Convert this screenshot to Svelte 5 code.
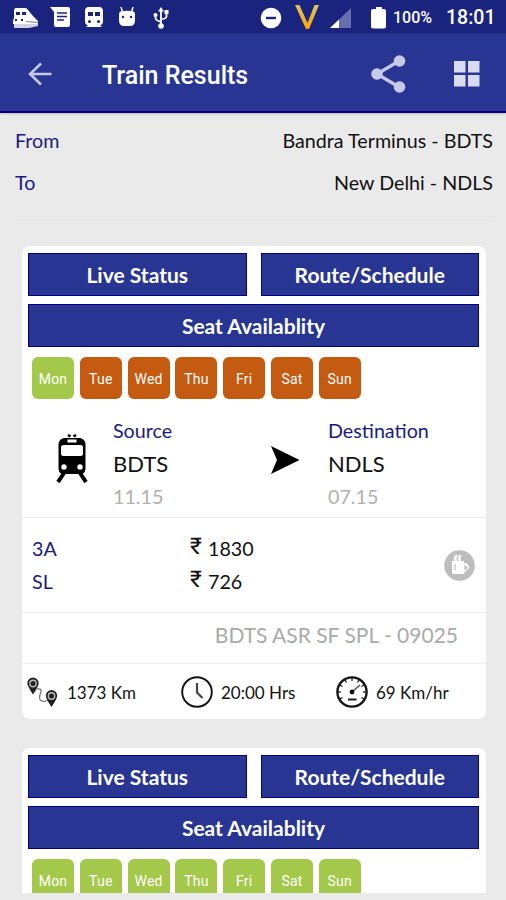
<script lang="ts">

  type Fare = { name: string, price: number };
  type Train = {
    runsOn: boolean[];
    details?: {
      name: string;
      source: string;
      departs: string;
      destination: string;
      arrives: string;
      fares: Fare[];
      distance: string;
      duration: string;
      speed: string;
    };
  };

  const DAYS = ["Mon", "Tue", "Wed", "Thu", "Fri", "Sat", "Sun"];

  const trains: Train[] = [
    {
      runsOn: [true, false, false, false, false, false, false],
      details: {
        name: "BDTS ASR SF SPL - 09025",
        source: "BDTS",
        departs: "11.15",
        destination: "NDLS",
        arrives: "07.15",
        fares: [
          { name: "3A", price: 1830 },
          { name: "SL", price: 726 },
        ],
        distance: "1373 Km",
        duration: "20:00 Hrs",
        speed: "69 Km/hr",
      },
    },
    { runsOn: [true, true, true, true, true, true, true] },
  ];

  // tick marks of the speedometer, in degrees
  const TICKS = [-120, -90, -60, -30, 0, 30, 60, 90, 120];

</script>

<main>

  <div class="status-bar">
    <div class="notifications">
      <svg width="26" height="22" viewBox="0 0 26 22" fill="#fff">
        <path d="M3 1h9q2 0 3 2l5 6 5 5v3H0v-3l1-3V4q0-3 2-3z" />
        <path d="M3 5h4v3H3zM9 5h4v3H9z" fill="#1a237e" />
        <path d="M2 12h2v2H2zM8 12h2v2H8z" fill="#1a237e" />
        <path d="M13 14.500l12 1" stroke="#1a237e" stroke-width=".6" />
        <path d="M1 17h24v2l-9 2H1z" opacity=".8" />
      </svg>
      <svg width="21" height="21" viewBox="0 0 21 21">
        <path d="M0 0h18q2 0 2 2v16q0 2-2 2H6q-2 0-2-2V5z" fill="#fff" />
        <path d="M7 6h10M7 9.5h10M7 13h7" stroke="#1a237e" stroke-width="1.6" />
      </svg>
      <svg width="18" height="21" viewBox="0 0 18 21">
        <path d="M4 0h10q4 0 4 4v10q0 4-3 4l2 2H1l2-2q-3 0-3-4V4q0-4 4-4z" fill="#fff" />
        <path d="M3 5h5v4H3zM10 5h5v4h-5z" fill="#1a237e" />
        <circle cx="4.5" cy="14.5" r="1.5" fill="#1a237e" />
        <circle cx="13.5" cy="14.5" r="1.5" fill="#1a237e" />
      </svg>
      <svg class="bot" width="18" height="21" viewBox="0 0 18 21">
        <path d="M3 0l1.500 5M15 0l-1.500 5" stroke="#fff" stroke-width="1.5" />
        <path d="M2.500 4.500q6.500-1.500 13 0 1.500.5 1.500 3V13q0 6-5 6H6q-5 0-5-6V7.500q0-2.500 1.500-3z" fill="#fff" />
        <circle cx="5" cy="10" r="1.200" fill="#1a237e" />
        <circle cx="13" cy="10" r="1.200" fill="#1a237e" />
      </svg>
      <svg class="usb" width="16" height="22" viewBox="0 0 16 22" fill="#fff">
        <path d="M8 3v16M2.500 9v2q0 2 2 2.500L8 15M13.500 6v3.500q0 1.500-2 2L8 12.500" fill="none" stroke="#fff" stroke-width="1.800" />
        <path d="M8 0l3 4.500H5zM11.500 3h4v4h-4z" />
        <circle cx="2.500" cy="8" r="2" />
        <circle cx="8" cy="19" r="2.800" />
      </svg>
    </div>
    <div class="system">
      <svg width="22" height="22" viewBox="0 0 22 22">
        <circle cx="11" cy="11" r="10.300" fill="#fff" />
        <path d="M6 11h10" stroke="#1a237e" stroke-width="2.400" />
      </svg>
      <svg class="brand" width="24" height="25" viewBox="0 0 24 25">
        <defs>
          <linearGradient id="gold" x2="0" y2="1">
            <stop offset="0" stop-color="#d8c260" />
            <stop offset="1" stop-color="#ffa500" />
          </linearGradient>
        </defs>
        <path d="M0 0h4.500l8 18 7-18H24L14 24h-3z" fill="url(#gold)" />
      </svg>
      <svg class="signal" width="21" height="20" viewBox="0 0 21 20">
        <path d="M21 0v20H0z" fill="#6670ad" />
        <path d="M9 11.500V20H0z" fill="#fff" />
      </svg>
      <svg class="battery" width="15" height="22" viewBox="0 0 15 22">
        <path d="M5 0h6v2h2q2 0 2 2v15.500q0 2-2 2H2q-2 0-2-2V4q0-2 2-2h3z" fill="#fff" />
      </svg>
      <span class="percent">100%</span>
      <span class="clock">18:01</span>
    </div>
  </div>

  <header>
    <svg width="24" height="24" viewBox="0 0 24 24" fill="none" stroke="#c5cae9" stroke-width="2.500">
      <path d="M23.500 12H2M13 1.500L2 12l11 10.500" />
    </svg>
    <h1>Train Results</h1>
    <svg class="share" width="35" height="38" viewBox="0 0 35 38" fill="#c5cae9">
      <path d="M28 6L6 19l22 13" fill="none" stroke="#c5cae9" stroke-width="3.200" />
      <circle cx="28.500" cy="6" r="5.800" />
      <circle cx="6" cy="19" r="5.800" />
      <circle cx="28.500" cy="32" r="5.800" />
    </svg>
    <svg width="26" height="26" viewBox="0 0 26 26" fill="#d9dcf0">
      <path d="M0 0h11.500v11.500H0zM14 0h11.500v11.500H14zM0 14h11.500v11.500H0zM14 14h11.500v11.500H14z" />
    </svg>
  </header>

  <section class="trip">
    <div><span class="label">From</span><span>Bandra Terminus - BDTS</span></div>
    <div><span class="label">To</span><span>New Delhi - NDLS</span></div>
  </section>

  <div class="list">
    {#each trains as train}
      <article>
        <div class="actions">
          <button>Live Status</button>
          <button>Route/Schedule</button>
          <button class="wide">Seat Availablity</button>
        </div>

        <div class="days">
          {#each DAYS as day, i}
            <span class:runs={train.runsOn[i]}>{day}</span>
          {/each}
        </div>

        {#if train.details}
          <div class="stations">
            <svg class="train" width="32" height="49" viewBox="0 0 32 49">
              <path d="M12 1l2.500 1.500M20 1l-2.500 1.500" stroke="#000" stroke-width="2.500" />
              <path d="M8 4h16q5 1 5.500 6v24q0 6-5 6H7.500q-5 0-5-6V10Q3 5 8 4z" />
              <path d="M11.500 5.500h9v3h-9z" fill="#fff" />
              <rect x="5" y="11" width="22" height="11" rx="2.500" fill="#fff" />
              <circle cx="8" cy="33" r="2.700" fill="#fff" />
              <circle cx="24" cy="33" r="2.700" fill="#fff" />
              <path d="M8 39L2 48M24 39l6 9" stroke="#000" stroke-width="4" />
            </svg>
            <div class="station">
              <span class="label">Source</span>
              <strong>{train.details.source}</strong>
              <time>{train.details.departs}</time>
            </div>
            <svg class="arrow" width="29" height="28" viewBox="0 0 29 28">
              <path d="M0 0l28.500 14L0 28l6-14z" />
            </svg>
            <div class="station">
              <span class="label">Destination</span>
              <strong>{train.details.destination}</strong>
              <time>{train.details.arrives}</time>
            </div>
          </div>

          <div class="fares">
            <div class="rows">
              {#each train.details.fares as fare}
                <div class="fare">
                  <span class="label">{fare.name}</span>
                  <span class="rupee">₹</span>
                  <span>{fare.price}</span>
                </div>
              {/each}
            </div>
            <svg width="31" height="31" viewBox="0 0 31 31">
              <circle cx="15.500" cy="15.500" r="15.300" fill="#bdbdbd" />
              <path d="M8 11h12v2l3 .5 2.500 4-5 5q0 1.500-2 1.500h-9q-1.500 0-1.500-2z" fill="#fff" />
              <path d="M12 11l-1-3 2-3M16 11l-1-3 1.500-3" fill="none" stroke="#fff" stroke-width="2.400" />
              <path d="M11 14v6M21 16l2 1.500-2 2z" fill="#bdbdbd" stroke="#bdbdbd" stroke-width="1.200" />
            </svg>
          </div>

          <div class="name">{train.details.name}</div>

          <div class="stats">
            <div class="distance">
              <svg width="31" height="30" viewBox="0 0 31 30">
                <path d="M10 12q6-1 3.500 4-2.500 7 1.500 8 3 1 6-1" fill="none" stroke="#777" stroke-width="1.300" />
                <path d="M6 17.500Q.3 9 .3 6.200a5.700 5.700 0 0 1 11.400 0Q11.700 9 6 17.500zM24.500 30q-5.700-8.500-5.700-11.300a5.700 5.700 0 0 1 11.400 0q0 2.800-5.700 11.300z" fill="#222" />
                <circle cx="6" cy="6.500" r="3.200" fill="none" stroke="#bbb" stroke-width="1.400" />
                <circle cx="24.500" cy="19" r="3.200" fill="none" stroke="#bbb" stroke-width="1.400" />
              </svg>
              {train.details.distance}
            </div>
            <div>
              <svg width="32" height="32" viewBox="0 0 32 32" fill="none" stroke="#111">
                <circle cx="16" cy="16" r="14.800" stroke-width="1.900" />
                <path d="M16 7v9.500l5.500 5.500" stroke="#444" stroke-width="2.200" />
              </svg>
              {train.details.duration}
            </div>
            <div>
              <svg width="32" height="32" viewBox="0 0 32 32" fill="none" stroke="#111">
                <circle cx="16" cy="16" r="14.600" stroke-width="2.300" />
                {#each TICKS as angle}
                  <path d="M16 2v3" stroke-width="1.200" transform="rotate({angle} 16 16)" />
                {/each}
                <path d="M16 16l8-7" stroke="#555" stroke-width="1.600" />
                <circle cx="16" cy="16" r="2.400" fill="#111" stroke="none" />
                <path d="M12 23.500h8.500" stroke-width="1.900" />
              </svg>
              {train.details.speed}
            </div>
          </div>
        {/if}
      </article>
    {/each}
  </div>

</main>

<style>

  :global(body) {
    margin: 0;
    background: #eaeaea;
  }

  main {
    display: flex;
    flex-direction: column;
    box-sizing: border-box;
    height: 900px;
    padding-bottom: 7px;
    overflow: hidden;
    background: #eaeaea;
    color: #111;
    font-family: Lato, "Liberation Sans", sans-serif;
    font-size: 19.700px;
  }

  svg {
    display: block;
    flex: none;
  }

  .status-bar {
    display: flex;
    flex: none;
    justify-content: space-between;
    box-sizing: border-box;
    height: 34px;
    padding: 0 11px 0 13px;
    background: #1a237e;
    color: #fff;
    font-family: Roboto, sans-serif;
  }

  .notifications, .system {
    display: flex;
    align-items: center;
    padding-top: 1px;
  }

  .notifications {
    gap: 14px;
  }

  .notifications svg:first-child {
    margin-right: -3px;
  }

  .notifications .bot {
    margin-left: 1px;
  }

  .notifications .usb {
    margin-left: 3px;
  }

  .brand {
    margin-left: 13px;
  }

  .signal {
    margin-left: 11px;
  }

  .battery {
    margin-left: 20px;
  }

  .percent {
    width: 40px;
    margin-left: 7px;
    font-size: 16px;
    font-weight: 500;
  }

  .clock {
    width: 49px;
    margin-left: 13px;
    font-size: 19.500px;
    font-weight: 500;
  }

  header {
    display: flex;
    flex: none;
    align-items: center;
    box-sizing: border-box;
    height: 79px;
    padding: 2px 26px 0 28px;
    border-bottom: 2px solid #000080;
    background: #283593;
    box-shadow: 0 1px 2px #bbb;
  }

  h1 {
    flex: 1;
    margin: 3px 0 0 50px;
    color: #fff;
    font-family: Roboto, sans-serif;
    font-size: 25px;
    font-weight: 500;
  }

  .share {
    margin-right: 48px;
  }

  .trip {
    flex: none;
    box-sizing: border-box;
    height: 104px;
    margin: 0 13px 0 15px;
    padding-top: 7px;
    border-bottom: 1px solid #e6e6e6;
  }

  .trip div {
    display: flex;
    justify-content: space-between;
    height: 41.500px;
    line-height: 42px;
  }

  .label {
    color: #1a1a80;
  }

  .list {
    flex: 1;
    min-height: 0;
    padding: 29px 20px 0 22px;
    overflow: hidden;
  }

  article {
    box-sizing: border-box;
    height: 473px;
    margin-bottom: 28.500px;
    border-radius: 8px;
    background: #fff;
  }

  /* the last card runs off the bottom of the list */
  article:last-child {
    height: 160px;
    margin-bottom: 0;
  }

  .actions {
    display: grid;
    grid-template-columns: 1fr 1fr;
    gap: 8px 14px;
    padding: 7px 7px 0 6px;
  }

  button {
    height: 43px;
    padding: 0;
    border: 1.500px solid #000080;
    background: #283593;
    color: #fff;
    font: bold 21px Lato, sans-serif;
  }

  .wide {
    grid-column: 1 / 3;
  }

  .days {
    display: flex;
    gap: 5.800px;
    padding: 10px 0 0 10px;
  }

  .days span {
    width: 42px;
    height: 42px;
    border-radius: 6px;
    background: #c55a11;
    color: #fff;
    font: 14px/44px Roboto, sans-serif;
    letter-spacing: .2px;
    text-align: center;
  }

  .days .runs {
    background: #a4c84a;
  }

  .stations {
    display: grid;
    grid-template-columns: 59px 157px 58px 1fr;
    box-sizing: border-box;
    height: 119px;
    padding: 15px 0 0 32px;
    border-bottom: 1.500px solid #eee;
  }

  .train {
    margin: 20px 0 0 2px;
  }

  .arrow {
    margin: 32px 0 0 1px;
  }

  .station {
    display: flex;
    flex-direction: column;
    line-height: 33px;
  }

  .station strong {
    font-size: 22px;
    font-weight: normal;
  }

  time {
    color: #b0b0b0;
  }

  .fares {
    display: flex;
    align-items: center;
    justify-content: space-between;
    box-sizing: border-box;
    height: 95px;
    padding: 0 11px 0 10px;
    border-bottom: 1px solid #eee;
  }

  .fare {
    display: grid;
    grid-template-columns: 158px 18px auto;
    height: 33px;
    line-height: 33px;
  }

  .rupee {
    margin-top: -2px;
    font-family: Roboto, sans-serif;
    font-size: 23px;
  }

  .name {
    box-sizing: border-box;
    height: 51px;
    padding-right: 28px;
    border-bottom: 1px solid #eee;
    color: #aaa;
    font-size: 21px;
    line-height: 44px;
    text-align: right;
  }

  .stats {
    display: grid;
    grid-template-columns: 154px 155px 1fr;
    height: 56px;
    padding-left: 5px;
    font-size: 17px;
  }

  .stats div {
    display: flex;
    align-items: center;
    gap: 8px;
  }

  .stats .distance {
    gap: 9px;
  }

</style>
